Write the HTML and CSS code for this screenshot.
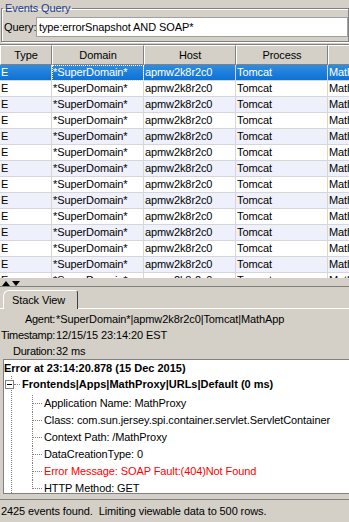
FILE: index.html
```html
<!DOCTYPE html>
<html lang="en">

<head>
    <meta charset="UTF-8">
    <meta name="viewport" content="width=device-width, initial-scale=1.0">
    <title>Events Query</title>
    <link rel="stylesheet" href="styles.css">
</head>

<body>
    <div class="app">
        <fieldset class="query-box">
            <legend>Events Query</legend>
            <label for="query">Query:</label>
            <input type="text" id="query" value="type:errorSnapshot AND SOAP*">
        </fieldset>

        <div class="table-pane">
            <table class="events">
                <colgroup>
                    <col class="c-type">
                    <col class="c-wide">
                    <col class="c-wide">
                    <col class="c-wide">
                    <col class="c-wide">
                </colgroup>
                <thead>
                    <tr>
                        <th>Type</th>
                        <th>Domain</th>
                        <th>Host</th>
                        <th>Process</th>
                        <th>Agent</th>
                    </tr>
                </thead>
                <tbody>
                    <tr class="selected">
                        <td>E</td><td class="focus">*SuperDomain*</td><td>apmw2k8r2c0</td><td>Tomcat</td><td>MathApp</td>
                    </tr>
                    <tr><td>E</td><td>*SuperDomain*</td><td>apmw2k8r2c0</td><td>Tomcat</td><td>MathApp</td></tr>
                    <tr><td>E</td><td>*SuperDomain*</td><td>apmw2k8r2c0</td><td>Tomcat</td><td>MathApp</td></tr>
                    <tr><td>E</td><td>*SuperDomain*</td><td>apmw2k8r2c0</td><td>Tomcat</td><td>MathApp</td></tr>
                    <tr><td>E</td><td>*SuperDomain*</td><td>apmw2k8r2c0</td><td>Tomcat</td><td>MathApp</td></tr>
                    <tr><td>E</td><td>*SuperDomain*</td><td>apmw2k8r2c0</td><td>Tomcat</td><td>MathApp</td></tr>
                    <tr><td>E</td><td>*SuperDomain*</td><td>apmw2k8r2c0</td><td>Tomcat</td><td>MathApp</td></tr>
                    <tr><td>E</td><td>*SuperDomain*</td><td>apmw2k8r2c0</td><td>Tomcat</td><td>MathApp</td></tr>
                    <tr><td>E</td><td>*SuperDomain*</td><td>apmw2k8r2c0</td><td>Tomcat</td><td>MathApp</td></tr>
                    <tr><td>E</td><td>*SuperDomain*</td><td>apmw2k8r2c0</td><td>Tomcat</td><td>MathApp</td></tr>
                    <tr><td>E</td><td>*SuperDomain*</td><td>apmw2k8r2c0</td><td>Tomcat</td><td>MathApp</td></tr>
                    <tr><td>E</td><td>*SuperDomain*</td><td>apmw2k8r2c0</td><td>Tomcat</td><td>MathApp</td></tr>
                    <tr><td>E</td><td>*SuperDomain*</td><td>apmw2k8r2c0</td><td>Tomcat</td><td>MathApp</td></tr>
                    <tr><td>E</td><td>*SuperDomain*</td><td>apmw2k8r2c0</td><td>Tomcat</td><td>MathApp</td></tr>
                </tbody>
            </table>
        </div>

        <div class="splitter">
            <svg width="22" height="5" viewBox="0 0 22 5">
                <polygon points="0,5 4,0 8,5" fill="#000"/>
                <polygon points="10,0 18,0 14,5" fill="#000"/>
            </svg>
        </div>

        <div class="tab-strip">
            <div class="tab">Stack View</div>
        </div>

        <div class="tab-body">
            <div class="details">
                <span class="key">Agent:</span><span>*SuperDomain*|apmw2k8r2c0|Tomcat|MathApp</span>
                <span class="key">Timestamp:</span><span>12/15/15 23:14:20 EST</span>
                <span class="key">Duration:</span><span>32 ms</span>
            </div>

            <div class="tree">
                <div class="root">Error at 23:14:20.878 (15 Dec 2015)</div>
                <div class="branch">
                    <div class="group"><span class="toggle"></span><span class="stub"></span>Frontends|Apps|MathProxy|URLs|Default (0 ms)</div>
                    <ul class="leaves">
                        <li>Application Name: MathProxy</li>
                        <li>Class: com.sun.jersey.spi.container.servlet.ServletContainer</li>
                        <li>Context Path: /MathProxy</li>
                        <li>DataCreationType: 0</li>
                        <li class="error">Error Message: SOAP Fault:(404)Not Found</li>
                        <li>HTTP Method: GET</li>
                    </ul>
                </div>
            </div>
        </div>

        <div class="status">2425 events found.&nbsp; Limiting viewable data to 500 rows.</div>
    </div>
</body>

</html>
```

FILE: styles.css
```css
* {
    box-sizing: border-box;
}

html,
body {
    margin: 0;
    padding: 0;
}

body {
    background-color: #d4d0c8;
    font-family: 'Liberation Sans', Arial, sans-serif;
    font-size: 11px;
    letter-spacing: -0.1px;
    color: #000;
    overflow: hidden;
}

.app {
    display: flex;
    flex-direction: column;
    width: 349px;
    height: 522px;
}

/* query group */

.query-box {
    display: flex;
    align-items: center;
    margin: 1px 0 0 1px;
    padding: 2px 0 4px 1px;
    border: 1px solid #808080;
    box-shadow: inset 1px 1px 0 #fff, 1px 1px 0 #fff;
    min-width: 0;
}

.query-box legend {
    padding: 0 2px;
    line-height: 14px;
    color: #1c3c8c;
}

.query-box label {
    width: 33px;
    padding-left: 1px;
}

.query-box input {
    flex: 1;
    min-width: 0;
    height: 20px;
    margin: 0;
    padding: 0 2px;
    border: 1px solid #a0a0a0;
    background: #fff;
    font: inherit;
    letter-spacing: inherit;
    color: #000;
    outline: none;
}

/* events table */

.table-pane {
    margin-top: 2px;
    height: 234px;
    border-top: 1px solid #808080;
    overflow: hidden;
}

.events {
    table-layout: fixed;
    width: 420px;
    border-collapse: separate;
    border-spacing: 0;
}

.c-type {
    width: 52px;
}

.c-wide {
    width: 92px;
}

.events th {
    height: 20px;
    padding: 0;
    font-weight: normal;
    background-color: #d4d0c8;
    border-top: 1px solid #fff;
    border-left: 1px solid #fff;
    border-right: 1px solid #808080;
    border-bottom: 1px solid #808080;
    white-space: nowrap;
    overflow: hidden;
}

.events td {
    height: 16px;
    padding: 0 0 0 1px;
    line-height: 15px;
    border-right: 1px solid #d6d6d6;
    border-bottom: 1px solid #d6d6d6;
    white-space: nowrap;
    overflow: hidden;
    background-color: #fff;
}

.events tbody tr:nth-child(odd) td {
    background-color: #eef1fb;
}

.events tr.selected td {
    background: linear-gradient(#2f8de2, #0d72d4);
    color: #fff;
}

.events td.focus {
    outline: 1px dotted #fff;
    outline-offset: -1px;
}

/* splitter + tabs */

.splitter {
    height: 9px;
    padding: 3px 0 0 2px;
    border-bottom: 1px solid #808080;
    line-height: 0;
}

.tab-strip {
    display: flex;
    padding: 3px 0 0 3px;
}

.tab {
    width: 75px;
    height: 19px;
    padding-left: 8px;
    line-height: 19px;
    border-top: 1px solid #fff;
    border-left: 1px solid #fff;
    border-right: 1px solid #404040;
    border-radius: 6px 3px 0 0;
    margin-bottom: -1px;
    background-color: #d4d0c8;
    position: relative;
}

.tab-body {
    flex: 1;
    display: flex;
    flex-direction: column;
    border-top: 1px solid #fff;
    padding-bottom: 5px;
    min-height: 0;
}

.details {
    display: grid;
    grid-template-columns: 55px 1fr;
    column-gap: 1px;
    padding-top: 2px;
    line-height: 16px;
    white-space: nowrap;
}

.details .key {
    text-align: right;
    letter-spacing: -0.3px;
}

/* stack tree */

.tree {
    flex: 1;
    margin-left: 3px;
    background: #fff;
    border-top: 1px solid #808080;
    border-left: 1px solid #808080;
    border-bottom: 1px solid #808080;
    overflow: hidden;
    white-space: nowrap;
}

.root {
    line-height: 16px;
    font-weight: bold;
    letter-spacing: 0;
}

.branch {
    margin-left: 7px;
    border-left: 1px dotted #808080;
    height: 100%;
}

.group {
    display: flex;
    align-items: center;
    margin-left: -7px;
    line-height: 16px;
    font-weight: bold;
    letter-spacing: 0;
}

.toggle {
    width: 9px;
    height: 9px;
    border: 1px solid #808080;
    background: #fff linear-gradient(#000, #000) no-repeat center / 5px 1px;
}

.stub {
    width: 6px;
    margin-right: 2px;
    border-top: 1px dotted #808080;
}

.leaves {
    list-style: none;
    margin: 3px 0 0 20px;
    padding: 0;
}

.leaves li {
    position: relative;
    padding-left: 12px;
    line-height: 17px;
}

.leaves li::before {
    content: "";
    position: absolute;
    left: 0;
    top: 8px;
    width: 10px;
    border-top: 1px dotted #808080;
}

.leaves li::after {
    content: "";
    position: absolute;
    left: 0;
    top: 0;
    height: 100%;
    border-left: 1px dotted #808080;
}

.leaves li:last-child::after {
    height: 9px;
}

.leaves li.error {
    color: #ff0000;
}

/* status bar */

.status {
    height: 23px;
    padding-left: 1px;
    line-height: 22px;
    border-top: 1px solid #808080;
    white-space: nowrap;
}
```
